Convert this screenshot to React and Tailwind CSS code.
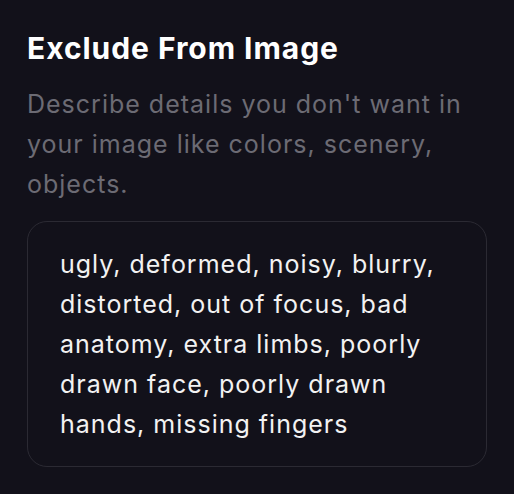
export default function App() {
  return (
    <div className="min-h-screen w-full bg-[#12111a] px-[27px] pt-[30px] font-['Inter',sans-serif]">
      <h2 className="text-[30px] leading-[36px] font-bold tracking-[0.95px] text-white">Exclude From Image</h2>
      <p className="mt-[18px] text-[25px] leading-[40px] tracking-[1px] text-[#6c6b74]">
        Describe details you don't want in your image like colors, scenery, objects.
      </p>
      <textarea
        className="mt-[17px] block h-[246px] w-full resize-none overflow-hidden rounded-[20px] border border-[#2b2a33] bg-transparent px-8 py-[22px] text-[25px] leading-[40px] tracking-[1px] text-[#f2f2f2] outline-none"
        defaultValue="ugly, deformed, noisy, blurry, distorted, out of focus, bad anatomy, extra limbs, poorly drawn face, poorly drawn hands, missing fingers"
      />
    </div>
  );
}
